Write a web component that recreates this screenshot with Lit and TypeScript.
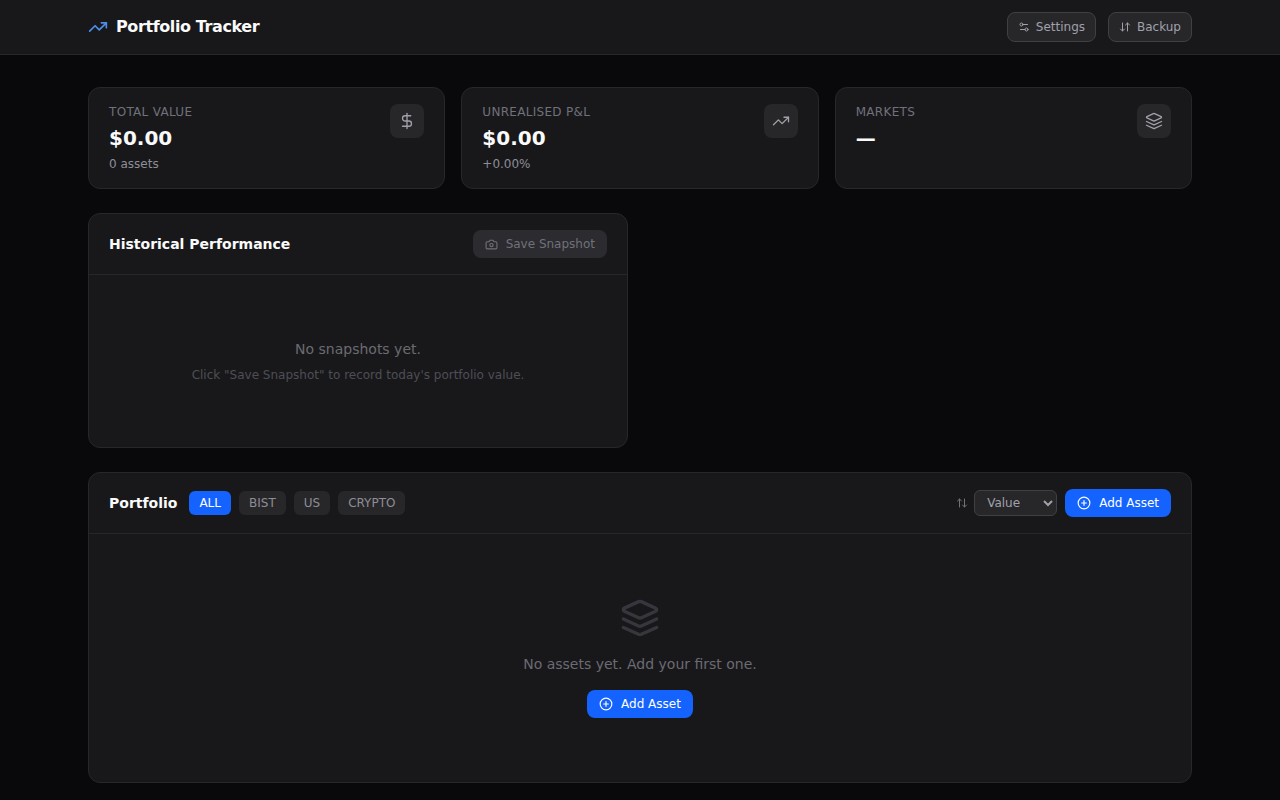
import { LitElement, html, css, svg } from 'lit';
import { customElement, state } from 'lit/decorators.js';

const icon = (paths: unknown, size: number, sw = 2) => html`
  <svg xmlns="http://www.w3.org/2000/svg" width=${size} height=${size} viewBox="0 0 24 24" fill="none"
    stroke="currentColor" stroke-width=${sw} stroke-linecap="round" stroke-linejoin="round">${paths}</svg>`;

const trending = svg`<polyline points="22 7 13.5 15.5 8.5 10.5 2 17"></polyline><polyline points="16 7 22 7 22 13"></polyline>`;
const sliders = svg`<path d="M14 17H5"></path><path d="M19 7h-9"></path><circle cx="17" cy="17" r="3"></circle><circle cx="7" cy="7" r="3"></circle>`;
const updown = svg`<path d="m21 16-4 4-4-4"></path><path d="M17 20V4"></path><path d="m3 8 4-4 4 4"></path><path d="M7 4v16"></path>`;
const dollar = svg`<line x1="12" x2="12" y1="2" y2="22"></line><path d="M17 5H9.5a3.5 3.5 0 0 0 0 7h5a3.5 3.5 0 0 1 0 7H6"></path>`;
const layers = svg`<path d="m12.83 2.18a2 2 0 0 0-1.66 0L2.6 6.08a1 1 0 0 0 0 1.83l8.58 3.91a2 2 0 0 0 1.66 0l8.58-3.9a1 1 0 0 0 0-1.83Z"></path><path d="m22 17.65-9.17 4.16a2 2 0 0 1-1.66 0L2 17.65"></path><path d="m22 12.65-9.17 4.16a2 2 0 0 1-1.66 0L2 12.65"></path>`;
const camera = svg`<path d="M14.5 4h-5L7 7H4a2 2 0 0 0-2 2v9a2 2 0 0 0 2 2h16a2 2 0 0 0 2-2V9a2 2 0 0 0-2-2h-3l-2.5-3z"></path><circle cx="12" cy="13" r="3"></circle>`;
const plusCircle = svg`<circle cx="12" cy="12" r="10"></circle><path d="M8 12h8"></path><path d="M12 8v8"></path>`;
const backupArrows = svg`<path d="m3 16 4 4 4-4"></path><path d="M7 20V4"></path><path d="m21 8-4-4-4 4"></path><path d="M17 4v16"></path>`;

@customElement('app-root')
export class AppRoot extends LitElement {
  @state() market = 'ALL';

  static styles = css`
    :host {
      display: block;
      min-height: 800px;
      background: #09090b;
      color: #f4f4f5;
      font-family: "DejaVu Sans", sans-serif;
    }

    button, select {
      font-family: inherit;
    }

    .topbar {
      height: 54px;
      background: #18181b;
      border-bottom: 1px solid #27272a;
    }

    .topbar-inner {
      box-sizing: border-box;
      max-width: 1152px;
      height: 100%;
      margin: 0 auto;
      padding: 0 24px;
      display: flex;
      align-items: center;
      justify-content: space-between;
    }

    .brand {
      display: flex;
      align-items: center;
      gap: 8px;
      margin-top: -1px;
      font-size: 16px;
      font-weight: 700;
      letter-spacing: -0.4px;
      color: #fafafa;
    }

    .brand svg {
      color: #4d8fe8;
    }

    .top-actions {
      display: flex;
      gap: 12px;
    }

    .ghost {
      display: flex;
      align-items: center;
      gap: 6px;
      height: 30px;
      padding: 0 10px;
      background: #27272a;
      border: 1px solid #3f3f46;
      border-radius: 8px;
      color: #a1a1aa;
      font-size: 12px;
    }

    main {
      box-sizing: border-box;
      max-width: 1152px;
      margin: 0 auto;
      padding: 32px 24px;
      display: flex;
      flex-direction: column;
      gap: 24px;
    }

    .stats {
      display: grid;
      grid-template-columns: repeat(3, 1fr);
      gap: 16px;
    }

    .stat {
      box-sizing: border-box;
      height: 102px;
      padding: 16px 20px;
      display: flex;
      justify-content: space-between;
      background: #18181b;
      border: 1px solid #27272a;
      border-radius: 12px;
    }

    .stat-label {
      font-size: 12px;
      line-height: 16px;
      letter-spacing: 0.3px;
      color: #71717a;
    }

    .stat-value {
      margin-top: 4px;
      font-size: 20px;
      line-height: 28px;
      font-weight: 700;
      color: #fafafa;
    }

    .stat-sub {
      margin-top: 4px;
      font-size: 12px;
      line-height: 16px;
      color: #8e8e96;
    }

    .stat-icon {
      width: 34px;
      height: 34px;
      display: flex;
      align-items: center;
      justify-content: center;
      border-radius: 8px;
      background: #27272a;
      color: #a1a1aa;
    }

    .row {
      display: grid;
      grid-template-columns: repeat(2, 1fr);
      gap: 24px;
    }

    .panel {
      background: #18181b;
      border: 1px solid #27272a;
      border-radius: 12px;
    }

    .panel-head {
      box-sizing: border-box;
      height: 61px;
      padding: 0 20px;
      display: flex;
      align-items: center;
      justify-content: space-between;
      border-bottom: 1px solid #27272a;
    }

    .panel-title {
      font-size: 14px;
      font-weight: 700;
      color: #fafafa;
    }

    .snapshot {
      display: flex;
      align-items: center;
      gap: 8px;
      height: 28px;
      padding: 0 12px;
      background: #2b2b30;
      border: none;
      border-radius: 8px;
      color: #71717a;
      font-size: 12px;
    }

    .chart-empty {
      height: 172px;
      display: flex;
      flex-direction: column;
      align-items: center;
      justify-content: center;
      gap: 8px;
    }

    .chart-empty .big {
      font-size: 14px;
      line-height: 20px;
      color: #6b6b72;
    }

    .chart-empty .small {
      font-size: 12px;
      line-height: 16px;
      color: #4e4e55;
    }

    .head-left, .head-right {
      display: flex;
      align-items: center;
    }

    .head-left .panel-title {
      margin-right: 12px;
    }

    .tabs {
      display: flex;
      gap: 8px;
    }

    .tab {
      height: 24px;
      padding: 0 10px;
      border: none;
      border-radius: 6px;
      background: #27272a;
      color: #8e8e96;
      font-size: 12px;
    }

    .tab.active {
      background: #1463ff;
      color: #fff;
    }

    .sort-icon {
      display: flex;
      color: #71717a;
      margin-right: 6px;
    }

    select {
      width: 83px;
      height: 26px;
      padding: 0 8px;
      margin-right: 8px;
      background: #27272a;
      border: 1px solid #3f3f46;
      border-radius: 6px;
      color: #a1a1aa;
      font-size: 12px;
    }

    .primary {
      display: flex;
      align-items: center;
      gap: 8px;
      height: 28px;
      padding: 0 12px;
      background: #1463ff;
      border: none;
      border-radius: 8px;
      color: #fff;
      font-size: 12px;
    }

    .assets-empty {
      height: 248px;
      display: flex;
      flex-direction: column;
      align-items: center;
      padding-top: 64px;
      box-sizing: border-box;
    }

    .assets-empty svg {
      color: #36363c;
    }

    .assets-empty .primary svg {
      color: #fff;
    }

    .assets-empty p {
      margin: 16px 0 16px;
      font-size: 14px;
      line-height: 20px;
      color: #6b6b72;
    }
  `;

  render() {
    const tabs = ['ALL', 'BIST', 'US', 'CRYPTO'];
    return html`
      <header class="topbar">
        <div class="topbar-inner">
          <div class="brand">${icon(trending, 20)}<span>Portfolio Tracker</span></div>
          <div class="top-actions">
            <button class="ghost">${icon(sliders, 12)}Settings</button>
            <button class="ghost">${icon(backupArrows, 12)}Backup</button>
          </div>
        </div>
      </header>
      <main>
        <section class="stats">
          ${this.stat('TOTAL VALUE', '$0.00', '0 assets', dollar)}
          ${this.stat('UNREALISED P&L', '$0.00', '+0.00%', trending)}
          ${this.stat('MARKETS', '—', '', layers)}
        </section>
        <section class="row">
          <div class="panel">
            <div class="panel-head">
              <span class="panel-title">Historical Performance</span>
              <button class="snapshot">${icon(camera, 13)}Save Snapshot</button>
            </div>
            <div class="chart-empty">
              <div class="big">No snapshots yet.</div>
              <div class="small">Click "Save Snapshot" to record today's portfolio value.</div>
            </div>
          </div>
        </section>
        <section class="panel">
          <div class="panel-head">
            <div class="head-left">
              <span class="panel-title">Portfolio</span>
              <div class="tabs">
                ${tabs.map(t => html`<button class="tab ${t === this.market ? 'active' : ''}"
                  @click=${() => { this.market = t; }}>${t}</button>`)}
              </div>
            </div>
            <div class="head-right">
              <span class="sort-icon">${icon(updown, 12)}</span>
              <select><option>Value</option><option>Name</option></select>
              <button class="primary">${icon(plusCircle, 14)}Add Asset</button>
            </div>
          </div>
          <div class="assets-empty">
            ${icon(layers, 40)}
            <p>No assets yet. Add your first one.</p>
            <button class="primary">${icon(plusCircle, 14)}Add Asset</button>
          </div>
        </section>
      </main>
    `;
  }

  stat(label: string, value: string, sub: string, glyph: unknown) {
    return html`
      <div class="stat">
        <div>
          <div class="stat-label">${label}</div>
          <div class="stat-value">${value}</div>
          ${sub ? html`<div class="stat-sub">${sub}</div>` : ''}
        </div>
        <div class="stat-icon">${icon(glyph, 18, 1.75)}</div>
      </div>
    `;
  }
}
